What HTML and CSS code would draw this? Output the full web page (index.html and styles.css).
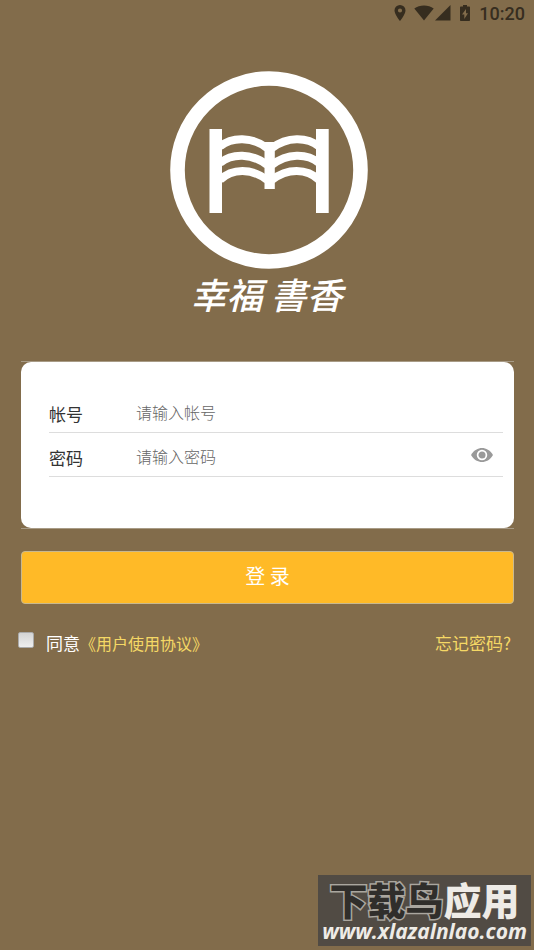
FILE: index.html
```html
<!DOCTYPE html>
<html lang="zh-CN">
<head>
<meta charset="utf-8">
<meta name="viewport" content="width=device-width, initial-scale=1">
<title>幸福书香</title>
<link rel="stylesheet" href="styles.css">
</head>
<body>
<header class="status">
  <svg width="12" height="16" viewBox="0 0 12 16" aria-hidden="true"><path fill="currentColor" fill-rule="evenodd" d="M6 0a5.500 5.500 0 0 0-5.500 5.500C.5 9.500 6 16 6 16s5.500-6.500 5.500-10.500A5.500 5.500 0 0 0 6 0Zm0 3.400a2.100 2.100 0 1 1 0 4.200 2.100 2.100 0 0 1 0-4.200Z"/></svg>
  <svg class="wifi" width="20" height="16" viewBox="0 0 20 16" aria-hidden="true"><path fill="currentColor" d="M10 15.500.3 3.500C3 1.500 6.300.4 10 .4s7 1.100 9.700 3.100Z"/></svg>
  <svg class="signal" width="16" height="16" viewBox="0 0 16 16" aria-hidden="true"><path fill="currentColor" d="M0 15.500h15.500V0Z"/></svg>
  <svg class="battery" width="12" height="16" viewBox="0 0 12 16" aria-hidden="true"><path fill="currentColor" fill-rule="evenodd" d="M4 0h4v1.600h2.200q.8 0 .8.800v12.800q0 .8-.8.800H1.800q-.8 0-.8-.8V2.400q0-.8.800-.8H4ZM7 4 3 9.500h2.300V14L9 8.200H7Z"/></svg>
  <time>10:20</time>
</header>
<main>
  <div class="brand">
    <svg width="198" height="198" viewBox="0 0 198 198" role="img" aria-label="幸福書香">
      <circle cx="99" cy="99" r="91.500" fill="none" stroke="#fff" stroke-width="14.600"/>
      <path fill="#fff" d="M39.500 58h12.500v84H39.500zM146 58h12.700v84H146zM94.500 71h10.300v47H94.500z"/>
      <path fill="none" stroke="#fff" stroke-width="8" d="M50 75.500C62 65.500 82 65.500 97 77M102 77C117 65.500 137 65.500 149 75.500M50 92C62 82 82 82 97 94M102 94C117 82 137 82 149 92M50 109C62 97 82 97 97 109M102 109C117 97 137 97 149 109"/>
    </svg>
    <h1><span>幸福</span><span>書香</span></h1>
  </div>
  <form>
    <div class="frame">
      <div class="card">
        <div class="row">
          <label for="account">帐号</label>
          <input id="account" type="text" placeholder="请输入帐号">
        </div>
        <div class="row">
          <label for="password">密码</label>
          <input id="password" type="password" placeholder="请输入密码">
          <button class="eye" type="button" aria-label="显示密码"><svg width="22" height="14" viewBox="0 0 22 14"><path fill="#999" d="M0 7C3 2 7 0 11 0s8 2 11 7c-3 5-7 7-11 7S3 12 0 7Z"/><circle cx="11" cy="7" r="4.400" fill="#999" stroke="#fff" stroke-width="1.700"/></svg></button>
        </div>
      </div>
    </div>
    <button class="login" type="submit">登 录</button>
    <div class="options">
      <input id="agree" type="checkbox">
      <label for="agree">同意</label><a class="terms" href="#terms">《用户使用协议》</a>
      <a class="forgot" href="#forgot">忘记密码?</a>
    </div>
  </form>
</main>
<footer class="mark">
  <p class="mark-name"><span>下载鸟</span>应用</p>
  <p class="mark-site">www.xlazalnlao.com</p>
</footer>
</body>
</html>
```
FILE: styles.css
```css
* {
  box-sizing: border-box;
}

body {
  display: flex;
  flex-direction: column;
  min-height: 100vh;
  margin: 0;
  background: #826c4b;
  color: #fff;
  font-family: "Noto Sans CJK SC", sans-serif;
  font-size: 17px;
  line-height: 24px;
}

a {
  color: #f5d865;
  text-decoration: none;
}

.status {
  display: flex;
  align-items: center;
  justify-content: flex-end;
  height: 28px;
  padding-right: 9px;
  color: #362d1f;
  font-family: Roboto, sans-serif;
  font-size: 18px;
  font-weight: 500;
}

.status svg {
  margin-bottom: 2px;
}

.status .wifi {
  margin-left: 8px;
}

.status .signal {
  margin-left: 1px;
}

.status .battery {
  margin-left: 8px;
  margin-right: 8px;
}

.brand {
  display: flex;
  flex-direction: column;
  align-items: center;
  padding: 43px 0 0 3px;
}

h1 {
  display: flex;
  gap: 8px;
  margin: 2px 0 0;
  padding-right: 4px;
  font-size: 36px;
  font-style: italic;
  font-weight: 500;
  line-height: 44px;
}

form {
  padding: 0 20px 0 21px;
}

.frame {
  margin-top: 46px;
  border: solid #a89b86;
  border-width: 1px 0;
}

.card {
  padding: 27px 11px 51px 28px;
  border-radius: 10px;
  background: #fff;
  color: #333;
}

.row {
  display: flex;
  align-items: center;
  height: 44px;
  padding-top: 6px;
  border-bottom: 1px solid #ddd;
}

.row label {
  width: 87px;
}

.row input {
  flex: 1;
  min-width: 0;
  padding: 0 0 3px;
  border: 0;
  outline: 0;
  background: none;
  color: #333;
  font: inherit;
  font-size: 16px;
}

.row input::placeholder {
  color: #666;
  font-weight: 300;
}

.eye {
  display: flex;
  margin: 0 10px 6px 0;
  padding: 0;
  border: 0;
  background: none;
}

.login {
  display: block;
  width: 100%;
  height: 53px;
  margin-top: 22px;
  padding: 0 0 3px;
  border: 1px solid #c8b88f;
  border-radius: 4px;
  background: #ffba27;
  color: #fff;
  font: inherit;
  font-size: 20px;
}

.options {
  display: flex;
  align-items: center;
  margin: 27px 0 0 -3px;
}

.options input {
  appearance: none;
  width: 16px;
  height: 16px;
  margin: 0 12px 6px 0;
  border: 1px solid #aaa;
  border-radius: 2px;
  background: linear-gradient(#d4d4d4, #eee);
}

.options input:checked {
  background: #ffba27;
}

.terms {
  font-size: 16px;
}

.forgot {
  margin-left: auto;
  margin-right: 3px;
}

.mark {
  align-self: flex-end;
  margin: auto 3px 4px auto;
  padding: 6px 4px 0;
  background: #514b44;
  color: #eeebe6;
  text-align: center;
}

.mark p {
  margin: 0;
}

.mark-name {
  font-size: 38px;
  font-weight: 900;
  line-height: 36px;
}

.mark-name span {
  color: #302e2b;
  -webkit-text-stroke: 3px #aaa69f;
  paint-order: stroke fill;
}

.mark-site {
  font-family: "Open Sans", sans-serif;
  font-size: 21px;
  font-style: italic;
  font-weight: 700;
  line-height: 29px;
}
```
